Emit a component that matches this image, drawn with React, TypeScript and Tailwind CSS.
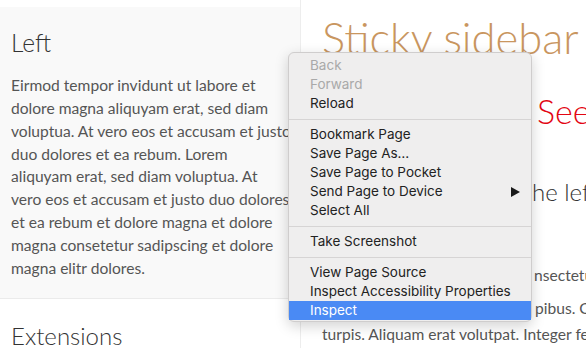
import React from "react";

const MenuItem = ({ label, disabled, active, arrow }: { label: string; disabled?: boolean; active?: boolean; arrow?: boolean }) => (
  <div
    className={
      "h-[19px] flex items-center justify-between whitespace-nowrap pl-[21px] pr-[11px] text-[13.5px] leading-[19px] " +
      (active ? "bg-[#4a8af4] text-white" : disabled ? "text-[#a9a9a9]" : "text-[#222]")
    }
  >
    <span>{label}</span>
    {arrow && (
      <svg width="9" height="10" viewBox="0 0 9 10">
        <path d="M0 0 L9 5 L0 10 Z" fill="#1a1a1a" />
      </svg>
    )}
  </div>
);

const Sep = () => (
  <div className="h-[12px] flex items-center">
    <div className="h-px w-full bg-[#d6d4d4]" />
  </div>
);

const leftLines = [
  "Eirmod tempor invidunt ut labore et",
  "dolore magna aliquyam erat, sed diam",
  "voluptua. At vero eos et accusam et justo",
  "duo dolores et ea rebum. Lorem",
  "aliquyam erat, sed diam voluptua. At",
  "vero eos et accusam et justo duo dolores",
  "et ea rebum et dolore magna et dolore",
  "magna consetetur sadipscing et dolore",
  "magna elitr dolores.",
];

export default function App() {
  return (
    <div className="relative w-[586px] h-[348px] overflow-hidden bg-white font-['Lato',sans-serif]">
      <div className="flex">
        <aside className="w-[300px] shrink-0 pt-[7px]">
          <div className="bg-[#f9f9f9] px-[11px] pt-[23px] pb-[18px]">
            <h2 className="text-[24.5px] font-light leading-[1.1] text-[#333]">Left</h2>
            <p className="mt-[17px] text-[15.6px] leading-[22.86px] text-[#555]">
              {leftLines.map((l) => (
                <span key={l} className="block whitespace-nowrap">
                  {l}
                </span>
              ))}
            </p>
          </div>
          <div className="border-t border-[#ebebeb] px-[11px] pt-[24px]">
            <h2 className="text-[24px] font-light leading-[1.1] text-[#333]">Extensions</h2>
          </div>
        </aside>
        <main className="flex-1 min-w-0 border-l border-[#ededed] pl-[21px] overflow-hidden whitespace-nowrap">
          <h1 className="mt-[14px] text-[43.5px] font-light leading-[1.1] text-[#c9965f]">Sticky sidebar</h1>
          <h2 className="mt-[30px] text-[34px] font-light leading-[1.1] text-[#e30613]">
            <span className="inline-block w-[215px]" />
            See the demo
          </h2>
          <h3 className="mt-[50px] text-[24px] font-light leading-[1.1] text-[#333]">
            <span className="inline-block w-[210px]" />
            he left sidebar
          </h3>
          <p className="mt-[58px] text-[15.6px] leading-[22.86px] text-[#555]">
            <span className="inline-block w-[212px]" />
            nsectetur adipiscing elit.
          </p>
          <p className="mt-[9px] text-[15.6px] leading-[26px] text-[#555]">
            <span className="inline-block w-[213px]" />
            pibus. Curabitur
            <br />
            turpis. Aliquam erat volutpat. Integer feugiat
            <br />
            facilisis. Sed vestibulum orci sed facilisis.
          </p>
        </main>
      </div>

      <div className="absolute left-[288px] top-[52px] w-[244px] rounded-[6px] border border-[#cfcdcd] bg-[#efeeee] pt-[3px] pb-[1px] shadow-[0_4px_14px_rgba(0,0,0,0.18)] font-['Inter',sans-serif]">
        <MenuItem label="Back" disabled />
        <MenuItem label="Forward" disabled />
        <MenuItem label="Reload" />
        <Sep />
        <MenuItem label="Bookmark Page" />
        <MenuItem label="Save Page As…" />
        <MenuItem label="Save Page to Pocket" />
        <MenuItem label="Send Page to Device" arrow />
        <MenuItem label="Select All" />
        <Sep />
        <MenuItem label="Take Screenshot" />
        <Sep />
        <MenuItem label="View Page Source" />
        <MenuItem label="Inspect Accessibility Properties" />
        <MenuItem label="Inspect" active />
      </div>
    </div>
  );
}
